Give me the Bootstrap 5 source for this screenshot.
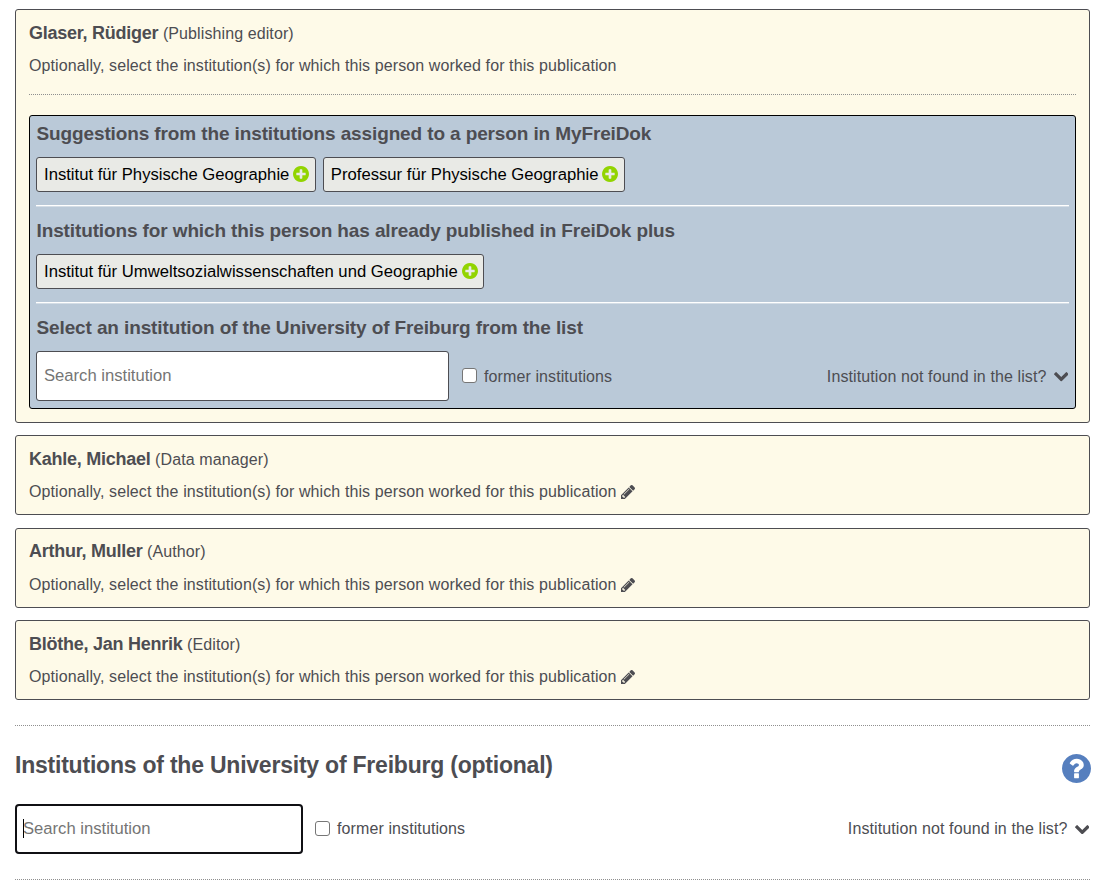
<!DOCTYPE html>
<html lang="en">
<head>
<meta charset="utf-8">
<meta name="viewport" content="width=device-width, initial-scale=1">
<title>Institutions</title>
<link href="https://cdn.jsdelivr.net/npm/bootstrap@5.3.0/dist/css/bootstrap.min.css" rel="stylesheet">
<style>
  body { font-family: "Liberation Sans", Arial, sans-serif; font-size: 16px; line-height: 24px; letter-spacing: .103px; color: #4d4d52; background: #fff; overflow: hidden; }
  .page { padding: 9px 10px 0 15px; }
  .person { --bs-card-bg: #fefae8; --bs-card-border-color: #4d4d52; --bs-card-border-radius: 3px; color: inherit; height: 80px; padding: 11px 13px 0; }
  .person.open { height: 414px; }
  .person .name { height: 25px; line-height: 25px; }
  .person .name strong { font-size: 18px; letter-spacing: -.25px; }
  .person .hint { margin-top: 7px; height: 25px; line-height: 25px; }
  .person.tight { padding-top: 10px; }
  .person.tight .hint { margin-top: 8px; }
  .dots { border-top: 1px dotted #8f8f8f; height: 1px; }
  .panel { background: #bac9d8; border: 1px solid #000; border-radius: 3px; height: 294px; padding: 0 6px; margin-top: 20px; }
  .panel h4 { font-size: 19px; font-weight: 700; line-height: 24px; letter-spacing: -.12px; margin: 0; padding: 6px 0 0 .5px; height: 41px; white-space: nowrap; }
  .rule { height: 2px; background: linear-gradient(#fff 50%, #d4dde6 50%); margin: 13px 0 6px; }
  .inst { --bs-btn-font-size: 16.67px; --bs-btn-line-height: 24px; --bs-btn-color: #000; --bs-btn-bg: #e9eae6; --bs-btn-border-color: #4d4d52; --bs-btn-border-radius: 3px; --bs-btn-padding-x: 7px; --bs-btn-padding-y: 0; height: 35px; padding-right: 5.5px; letter-spacing: 0; }
  .inst .ico { margin-bottom: 2px; }
  .search.form-control { height: 50px; border: 1px solid #4d4d52; border-radius: 3px; padding: 0 7px; font-size: 16.64px; letter-spacing: 0; flex: none; }
  .search::placeholder { color: #757575; }
  .search.form-control.active { border: 2px solid #101014; border-radius: 4px; padding: 0 6px; }
  .caret { position: absolute; left: 8px; top: 15px; width: 1px; height: 19px; background: #000; }
  .w-list { width: 413px; } .w-main { width: 288px; }
  .page .form-check-input { width: 15px; height: 15px; margin: 0 0 2px; border: 1px solid #767676; border-radius: 3px; flex: none; }
  .t { white-space: nowrap; }
  .low { padding-top: 2px; }
  .ico { fill: currentColor; display: block; flex: none; }
  .edit { margin: 0 0 0 4px; }
  .title { font-size: 23px; font-weight: 700; line-height: 28px; letter-spacing: -.22px; margin: 0; white-space: nowrap; }
</style>
</head>
<body>
<svg class="d-none">
  <symbol id="plus" viewBox="128 128 1536 1536"><path d="M1344 960v-128q0-26-19-45t-45-19h-256v-256q0-26-19-45t-45-19h-128q-26 0-45 19t-19 45v256h-256q-26 0-45 19t-19 45v128q0 26 19 45t45 19h256v256q0 26 19 45t45 19h128q26 0 45-19t19-45v-256h256q26 0 45-19t19-45zm320-64q0 209-103 385.5t-279.5 279.5-385.5 103-385.5-103-279.5-279.5-103-385.5 103-385.5 279.5-279.5 385.5-103 385.5 103 279.5 279.5 103 385.5z"/></symbol>
  <symbol id="help" viewBox="128 128 1536 1536"><path d="M1024 1376v-192q0-14-9-23t-23-9h-192q-14 0-23 9t-9 23v192q0 14 9 23t23 9h192q14 0 23-9t9-23zm256-672q0-88-55.500-163t-138.500-116-170-41q-243 0-371 213-15 24 8 42l132 100q7 6 19 6 16 0 25-12 53-68 86-92 34-24 86-24 48 0 85.500 26t37.500 59q0 38-20 61t-68 45q-63 28-115.500 86.500t-52.500 125.500v36q0 14 9 23t23 9h192q14 0 23-9t9-23q0-19 21.500-49.500t54.500-49.500q32-18 49-28.500t46-35 44.500-48 28-60.500 12.500-81zm384 192q0 209-103 385.500t-279.500 279.500-385.500 103-385.500-103-279.500-279.500-103-385.500 103-385.500 279.500-279.500 385.500-103 385.500 103 279.500 279.500 103 385.500z"/></symbol>
  <symbol id="pencil" viewBox="128 149 1515 1515"><path d="M491 1536l91-91-235-235-91 91v107h128v128h107zm523-928q0-22-22-22-10 0-17 7l-542 542q-7 7-7 17 0 22 22 22 10 0 17-7l542-542q7-7 7-17zm-54-192l416 416-832 832h-416v-416zm683 96q0 53-37 90l-166 166-416-416 166-165q36-38 90-38 53 0 91 38l235 234q37 39 37 91z"/></symbol>
  <symbol id="down" viewBox="90 533 1612 1035"><path d="M1683 808l-742 741q-19 19-45 19t-45-19l-742-741q-19-19-19-45.500t19-45.500l166-165q19-19 45-19t45 19l531 531 531-531q19-19 45-19t45 19l166 165q19 19 19 45.500t-19 45.500z"/></symbol>
</svg>
<main class="page">
  <section class="card person open">
    <div class="name"><strong class="t">Glaser, Rüdiger</strong> <span class="t">(Publishing editor)</span></div>
    <div class="hint d-flex align-items-center"><span class="t">Optionally, select the institution(s) for which this person worked for this publication</span></div>
    <div class="dots" style="margin-top:16px"></div>
    <div class="panel">
      <h4>Suggestions from the institutions assigned to a person in MyFreiDok</h4>
      <div class="d-flex" style="gap:7px">
        <button class="btn inst d-flex align-items-center gap-1"><span class="t">Institut für Physische Geographie</span><svg class="ico" width="16" height="16" color="#92d400"><use href="#plus"/></svg></button>
        <button class="btn inst d-flex align-items-center gap-1"><span class="t">Professur für Physische Geographie</span><svg class="ico" width="16" height="16" color="#92d400"><use href="#plus"/></svg></button>
      </div>
      <div class="rule"></div>
      <h4>Institutions for which this person has already published in FreiDok plus</h4>
      <div class="d-flex">
        <button class="btn inst d-flex align-items-center gap-1"><span class="t">Institut für Umweltsozialwissenschaften und Geographie</span><svg class="ico" width="16" height="16" color="#92d400"><use href="#plus"/></svg></button>
      </div>
      <div class="rule"></div>
      <h4>Select an institution of the University of Freiburg from the list</h4>
      <div class="d-flex align-items-center">
        <input class="form-control search w-list" type="text" placeholder="Search institution">
        <input class="form-check-input" style="margin-left:13px" type="checkbox" id="f1">
        <label class="t low" style="margin-left:7px" for="f1">former institutions</label>
        <span class="t low ms-auto">Institution not found in the list?</span>
        <svg class="ico" style="margin:2px 1px 0 7px" width="14.500" height="9.500"><use href="#down"/></svg>
      </div>
    </div>
  </section>

  <section class="card person" style="margin-top:12px">
    <div class="name"><strong class="t">Kahle, Michael</strong> <span class="t">(Data manager)</span></div>
    <div class="hint d-flex align-items-center"><span class="t">Optionally, select the institution(s) for which this person worked for this publication</span><svg class="ico edit" width="14" height="14"><use href="#pencil"/></svg></div>
  </section>
  <section class="card person tight" style="margin-top:13px">
    <div class="name"><strong class="t">Arthur, Muller</strong> <span class="t">(Author)</span></div>
    <div class="hint d-flex align-items-center"><span class="t">Optionally, select the institution(s) for which this person worked for this publication</span><svg class="ico edit" width="14" height="14"><use href="#pencil"/></svg></div>
  </section>
  <section class="card person" style="margin-top:12px">
    <div class="name"><strong class="t">Blöthe, Jan Henrik</strong> <span class="t">(Editor)</span></div>
    <div class="hint d-flex align-items-center"><span class="t">Optionally, select the institution(s) for which this person worked for this publication</span><svg class="ico edit" width="14" height="14"><use href="#pencil"/></svg></div>
  </section>

  <div class="dots" style="margin-top:25px"></div>
  <div class="d-flex justify-content-between" style="margin-top:25px">
    <h2 class="title">Institutions of the University of Freiburg (optional)</h2>
    <svg class="ico" style="margin:2.500px -1px 0 0" width="29" height="29" color="#567fbe"><use href="#help"/></svg>
  </div>
  <div class="d-flex align-items-center" style="margin-top:21.500px">
    <div class="position-relative"><input class="form-control search active w-main" type="text" placeholder="Search institution"><span class="caret"></span></div>
    <input class="form-check-input" style="margin-left:12px" type="checkbox" id="f2">
    <label class="t" style="margin-left:7px" for="f2">former institutions</label>
    <span class="t ms-auto">Institution not found in the list?</span>
    <svg class="ico" style="margin:1px 1px 0 7px" width="14.500" height="9.500"><use href="#down"/></svg>
  </div>
  <div class="dots" style="margin-top:25px"></div>
</main>
<script src="https://cdn.jsdelivr.net/npm/bootstrap@5.3.0/dist/js/bootstrap.bundle.min.js"></script>
</body>
</html>
